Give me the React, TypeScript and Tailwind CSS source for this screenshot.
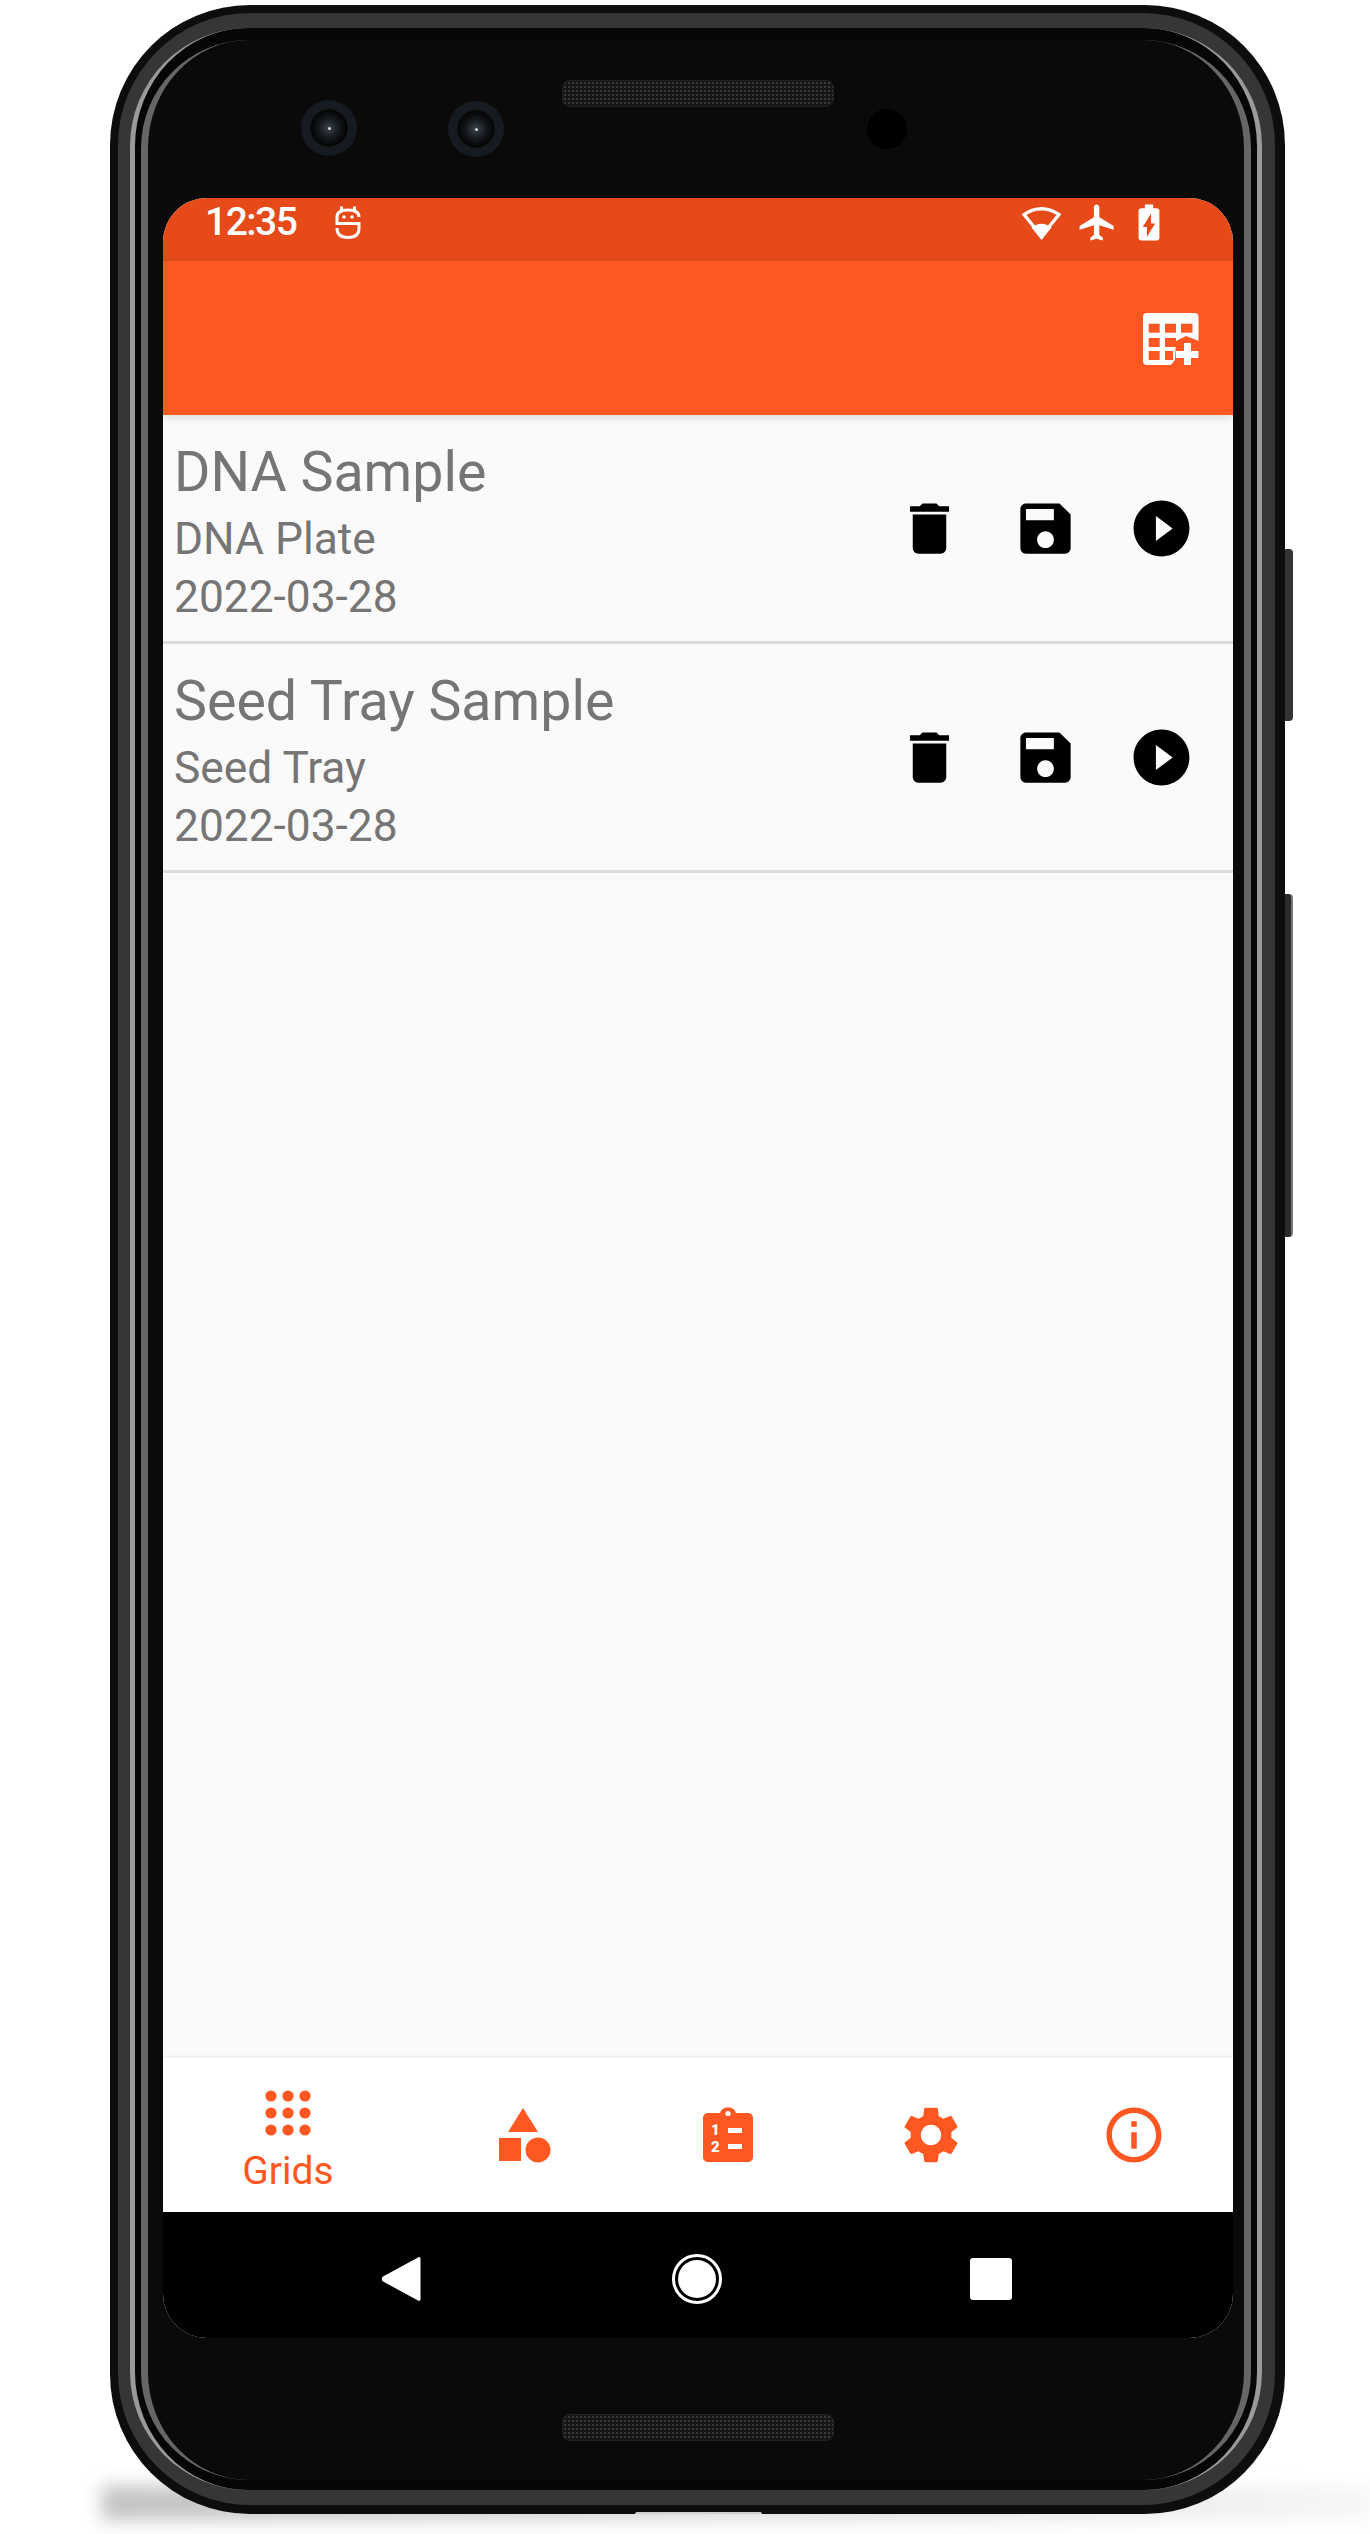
import React from 'react';

const ORANGE = '#FF5722';

const Camera: React.FC = () => (
  <div className="w-[56px] h-[56px] rounded-full bg-[#161b21] flex items-center justify-center flex-none">
    <div className="w-[38px] h-[38px] rounded-full bg-[radial-gradient(circle_at_50%_50%,#3b4450_0%,#14171b_38%,#050505_66%,#3a3c40_92%,#202226_100%)] flex items-center justify-center">
      <div className="w-[3px] h-[3px] rounded-full bg-[#d8d8d8]" />
    </div>
  </div>
);

const Speaker: React.FC<{ className?: string }> = ({ className }) => (
  <div
    className={`w-[272px] h-[27px] flex-none rounded-[8px] border border-[#222] bg-[#161616] bg-[radial-gradient(#3a3a3a_1px,transparent_1px)] bg-[size:4px_4px] ${className ?? ''}`}
  />
);

const DroidIcon = () => (
  <svg width="26" height="33" viewBox="0 0 26 33" fill="none">
    <path d="M24 11 Q24 4 13 4 Q2 4 2 11 V17.5 H24 V22 Q24 31.5 13 31.5 Q2 31.5 2 22" stroke="#fff" strokeWidth="3" />
    <rect x="5" y="0.5" width="3" height="3.5" fill="#fff" />
    <rect x="18" y="0.5" width="3" height="3.5" fill="#fff" />
    <circle cx="9" cy="11" r="1.8" fill="#fff" />
    <circle cx="17" cy="11" r="1.8" fill="#fff" />
  </svg>
);

const WifiIcon = () => (
  <svg width="41" height="34" viewBox="0 0 41 34" fill="none">
    <path d="M20.5 30 L3 8.5 Q20.5 -3 38 8.5 Z" stroke="#fff" strokeWidth="3.2" strokeLinejoin="miter" />
    <path d="M20.5 34 L10.5 21.5 Q20.5 14 30.5 21.5 Z" fill="#fff" />
  </svg>
);

const PlaneIcon = () => (
  <svg width="43" height="43" viewBox="0 0 24 24" fill="#fff">
    <path d="M21 16v-2l-8-5V3.5c0-.83-.67-1.5-1.5-1.5S10 2.67 10 3.5V9l-8 5v2l8-2.5V19l-2 1.5V22l3.5-1 3.5 1v-1.5L13 19v-5.5l8 2.5z" />
  </svg>
);

const BatteryIcon = () => (
  <svg width="50" height="43" viewBox="0 0 24 24" preserveAspectRatio="none" fill="#fff">
    <path d="M15.67 4H14V2h-4v2H8.33C7.6 4 7 4.6 7 5.33v15.33C7 21.4 7.6 22 8.33 22h7.33c.74 0 1.34-.6 1.34-1.33V5.33C17 4.6 16.4 4 15.67 4zM11 20v-5.5H9L13 7v5.5h2L11 20z" />
  </svg>
);

const TableAddIcon = () => (
  <svg width="56" height="53" viewBox="0 0 56 53">
    <rect x="0" y="0" width="55.5" height="52" rx="4" fill="#fff" />
    <g fill={ORANGE}>
      <rect x="5.7" y="10.7" width="11" height="9" />
      <rect x="22" y="10.7" width="11" height="9" />
      <rect x="38" y="10.7" width="11.5" height="9" />
      <rect x="5.7" y="25" width="11" height="9" />
      <rect x="22" y="25" width="11" height="9" />
      <rect x="5.7" y="38" width="11" height="9" />
      <rect x="22" y="38" width="8" height="9" />
      <path d="M33 28 L43 23 L56 28 V53 H27 L32 47 Z" />
    </g>
    <rect x="33" y="38" width="22.5" height="7" fill="#fff" />
    <rect x="41" y="30" width="7" height="22" fill="#fff" />
  </svg>
);

const TrashIcon = () => (
  <svg width="67" height="67" viewBox="0 0 24 24" fill="#000">
    <path d="M6 19c0 1.1.9 2 2 2h8c1.1 0 2-.9 2-2V7H6v12zM19 4h-3.5l-1-1h-5l-1 1H5v2h14V4z" />
  </svg>
);

const SaveIcon = () => (
  <svg width="67" height="67" viewBox="0 0 24 24" fill="#000">
    <path d="M17 3H5c-1.11 0-2 .9-2 2v14c0 1.1.89 2 2 2h14c1.1 0 2-.9 2-2V7l-4-4zm-5 16c-1.66 0-3-1.34-3-3s1.34-3 3-3 3 1.34 3 3-1.34 3-3 3zm3-10H5V5h10v4z" />
  </svg>
);

const PlayIcon = () => (
  <svg width="67" height="67" viewBox="0 0 24 24" fill="#000">
    <path d="M12 2C6.48 2 2 6.48 2 12s4.48 10 10 10 10-4.48 10-10S17.52 2 12 2zm-2 14.5v-9l6 4.5-6 4.5z" />
  </svg>
);

const DotsIcon = () => (
  <svg width="46" height="46" viewBox="0 0 46 46" fill={ORANGE}>
    {[6, 23, 40].map((y) =>
      [6, 23, 40].map((x) => <circle key={`${x}-${y}`} cx={x} cy={y} r="5.6" />)
    )}
  </svg>
);

const ShapesIcon = () => (
  <svg width="56" height="56" viewBox="0 0 56 56" fill={ORANGE}>
    <path d="M26 1 L41 25 H11 Z" />
    <rect x="2" y="31" width="22" height="23" />
    <circle cx="41" cy="43" r="12.5" />
  </svg>
);

const ChecklistIcon = () => (
  <svg width="50" height="56" viewBox="0 0 50 56">
    <path
      d="M5 6 H17 C18 2.5 21 0.5 25 0.5 C29 0.5 32 2.5 33 6 H45 C47.8 6 50 8.2 50 11 V50 C50 52.8 47.8 55 45 55 H5 C2.2 55 0 52.8 0 50 V11 C0 8.2 2.2 6 5 6 Z"
      fill={ORANGE}
    />
    <circle cx="25" cy="6.5" r="2.6" fill="#fff" />
    <text x="8" y="28" fontFamily="Roboto" fontWeight="900" fontSize="15" fill="#fff">1</text>
    <text x="8" y="45" fontFamily="Roboto" fontWeight="900" fontSize="15" fill="#fff">2</text>
    <rect x="25" y="21" width="14" height="5" fill="#fff" />
    <rect x="25" y="37" width="14" height="5" fill="#fff" />
  </svg>
);

const GearIcon = () => (
  <svg width="68" height="68" viewBox="0 0 24 24" fill={ORANGE}>
    <path d="M19.14 12.94c.04-.3.06-.61.06-.94 0-.32-.02-.64-.07-.94l2.03-1.58c.18-.14.23-.41.12-.61l-1.92-3.32c-.12-.22-.37-.29-.59-.22l-2.39.96c-.5-.38-1.03-.7-1.62-.94l-.36-2.54c-.04-.24-.24-.41-.48-.41h-3.84c-.24 0-.43.17-.47.41l-.36 2.54c-.59.24-1.13.57-1.62.94l-2.39-.96c-.22-.08-.47 0-.59.22L2.74 8.87c-.12.21-.08.47.12.61l2.03 1.58c-.05.3-.09.63-.09.94s.02.64.07.94l-2.03 1.58c-.18.14-.23.41-.12.61l1.92 3.32c.12.22.37.29.59.22l2.39-.96c.5.38 1.03.7 1.62.94l.36 2.54c.05.24.24.41.48.41h3.84c.24 0 .44-.17.47-.41l.36-2.54c.59-.24 1.13-.56 1.62-.94l2.39.96c.22.08.47 0 .59-.22l1.92-3.32c.12-.22.07-.47-.12-.61l-2.01-1.58zM12 15.6c-1.98 0-3.6-1.62-3.6-3.6s1.62-3.6 3.6-3.6 3.6 1.62 3.6 3.6-1.62 3.6-3.6 3.6z" />
  </svg>
);

const InfoIcon = () => (
  <svg width="66" height="66" viewBox="0 0 24 24" fill={ORANGE}>
    <path d="M11 7h2v2h-2zm0 4h2v6h-2zm1-9C6.48 2 2 6.48 2 12s4.48 10 10 10 10-4.48 10-10S17.52 2 12 2zm0 18c-4.41 0-8-3.59-8-8s3.59-8 8-8 8 3.59 8 8-3.59 8-8 8z" />
  </svg>
);

const gridsData = [
  { id: 1, name: 'DNA Sample', type: 'DNA Plate', date: '2022-03-28' },
  { id: 2, name: 'Seed Tray Sample', type: 'Seed Tray', date: '2022-03-28' },
];

const GridRow: React.FC<{ name: string; type: string; date: string }> = ({ name, type, date }) => (
  <div className="flex items-center justify-between h-[229px] pl-[11px] pr-[38px] border-b-[3px] border-[#dcdcdc] text-[#757575]">
    <div className="flex flex-col pt-[7px]">
      <div className="text-[55.5px] leading-[62px]">{name}</div>
      <div className="text-[44.3px] leading-[50px] mt-[10px]">{type}</div>
      <div className="text-[44.3px] leading-[50px] mt-[8px]">{date}</div>
    </div>
    <div className="flex items-center gap-[49px]">
      <TrashIcon />
      <SaveIcon />
      <PlayIcon />
    </div>
  </div>
);

const Screen: React.FC = () => (
  <div className="ml-[15px] mr-[11px] h-[2140px] rounded-[44px] overflow-hidden flex flex-col bg-[#fafafa] font-['Roboto',sans-serif]">
    <div className="h-[63px] flex-none bg-[#E64A19] flex items-center text-white pl-[42px] pr-[59px] pb-[14px]">
      <span className="text-[39px] leading-none font-medium tracking-[-1.5px]">12:35</span>
      <span className="ml-[39px] flex"><DroidIcon /></span>
      <div className="ml-auto flex items-center">
        <WifiIcon />
        <span className="ml-[14px] flex"><PlaneIcon /></span>
        <span className="ml-[5px] flex"><BatteryIcon /></span>
      </div>
    </div>
    <div className="h-[154px] flex-none bg-[#FF5722] flex items-center justify-end pr-[34px] pt-[2px] relative z-10 shadow-[0_2px_8px_rgba(0,0,0,0.14)]">
      <TableAddIcon />
    </div>
    <div className="flex-1">
      {gridsData.map((g) => (
        <GridRow key={g.id} name={g.name} type={g.type} date={g.date} />
      ))}
    </div>
    <div className="h-[154px] flex-none bg-white flex items-center shadow-[0_-1px_4px_rgba(0,0,0,0.07)] relative">
      <div className="w-[260px] flex-none pr-[10px] pt-[12px] flex flex-col items-center">
        <DotsIcon />
        <span className="text-[39px] leading-[44px] mt-[13px] text-[#FF5722]">Grids</span>
      </div>
      <div className="w-[203px] flex-none flex justify-center"><ShapesIcon /></div>
      <div className="w-[203px] flex-none flex justify-center"><ChecklistIcon /></div>
      <div className="w-[203px] flex-none flex justify-center"><GearIcon /></div>
      <div className="w-[203px] flex-none flex justify-center"><InfoIcon /></div>
    </div>
    <div className="h-[126px] flex-none bg-black flex items-center pt-[8px]">
      <svg className="ml-[218px] flex-none" width="40" height="46" viewBox="0 0 40 46" fill="#fff">
        <path d="M37 1.5 C38.5 0.5 39.5 1.5 39.5 3 V43 C39.5 44.5 38.5 45.5 37 44.5 L2 25.5 C0.5 24.5 0.5 21.5 2 20.5 Z" />
      </svg>
      <div className="ml-[251px] w-[50px] h-[50px] flex-none rounded-full border-[3px] border-white p-[3px]">
        <div className="w-full h-full rounded-full bg-white" />
      </div>
      <div className="ml-[248px] w-[42px] h-[42px] flex-none rounded-[3px] bg-white" />
    </div>
  </div>
);

export default function App() {
  return (
    <div className="w-[1370px] h-[2534px] bg-white overflow-hidden pt-[5px] pl-[110px]">
      <div className="relative w-[1175px] h-[2509px]">
        {/* ground shadow and side buttons */}
        <div className="absolute left-[-8px] right-[-90px] bottom-[-6px] h-[34px] bg-[linear-gradient(90deg,rgba(0,0,0,0.24),rgba(0,0,0,0.2)_20%,rgba(0,0,0,0.05)_92%,rgba(0,0,0,0.03))] blur-[9px]" />
        <div className="absolute left-[1172px] top-[544px] w-[11px] h-[172px] rounded-r-[4px] bg-[#333]" />
        <div className="absolute left-[1172px] top-[889px] w-[11px] h-[343px] rounded-r-[4px] bg-[#2a2a2a] border-r-2 border-[#777]" />

        <div className="relative w-full h-full rounded-[140px] bg-[#0d0d0d] pt-[8px] pb-[9px] pl-[8px] pr-[10px]">
          <div className="h-full rounded-[132px] bg-[#363636] pt-[15px] pb-[15px] pl-[12px] pr-[13px]">
            <div className="h-full rounded-[118px] border-x-[5px] border-[#9a9a9a] bg-[#060606] pt-[12px] pb-[10px] px-[6px]">
              <div className="h-full rounded-[108px] border-x-[7px] border-[#666] bg-[#0a0a0a] flex flex-col">
                <div className="h-[158px] flex-none flex items-start pl-[153px]">
                  <div className="mt-[60px]"><Camera /></div>
                  <div className="mt-[61px] ml-[91px]"><Camera /></div>
                  <Speaker className="mt-[40px] ml-[58px]" />
                  <div className="mt-[69px] ml-[33px] w-[40px] h-[40px] rounded-full bg-black flex-none" />
                </div>
                <Screen />
                <div className="flex-1 flex justify-center pt-[76px] pl-[4px]">
                  <Speaker />
                </div>
              </div>
            </div>
          </div>
        </div>
        <div className="absolute left-[525px] bottom-0 w-[127px] h-[2px] rounded-t-[2px] bg-[#cfcfcf]" />
      </div>
    </div>
  );
}
